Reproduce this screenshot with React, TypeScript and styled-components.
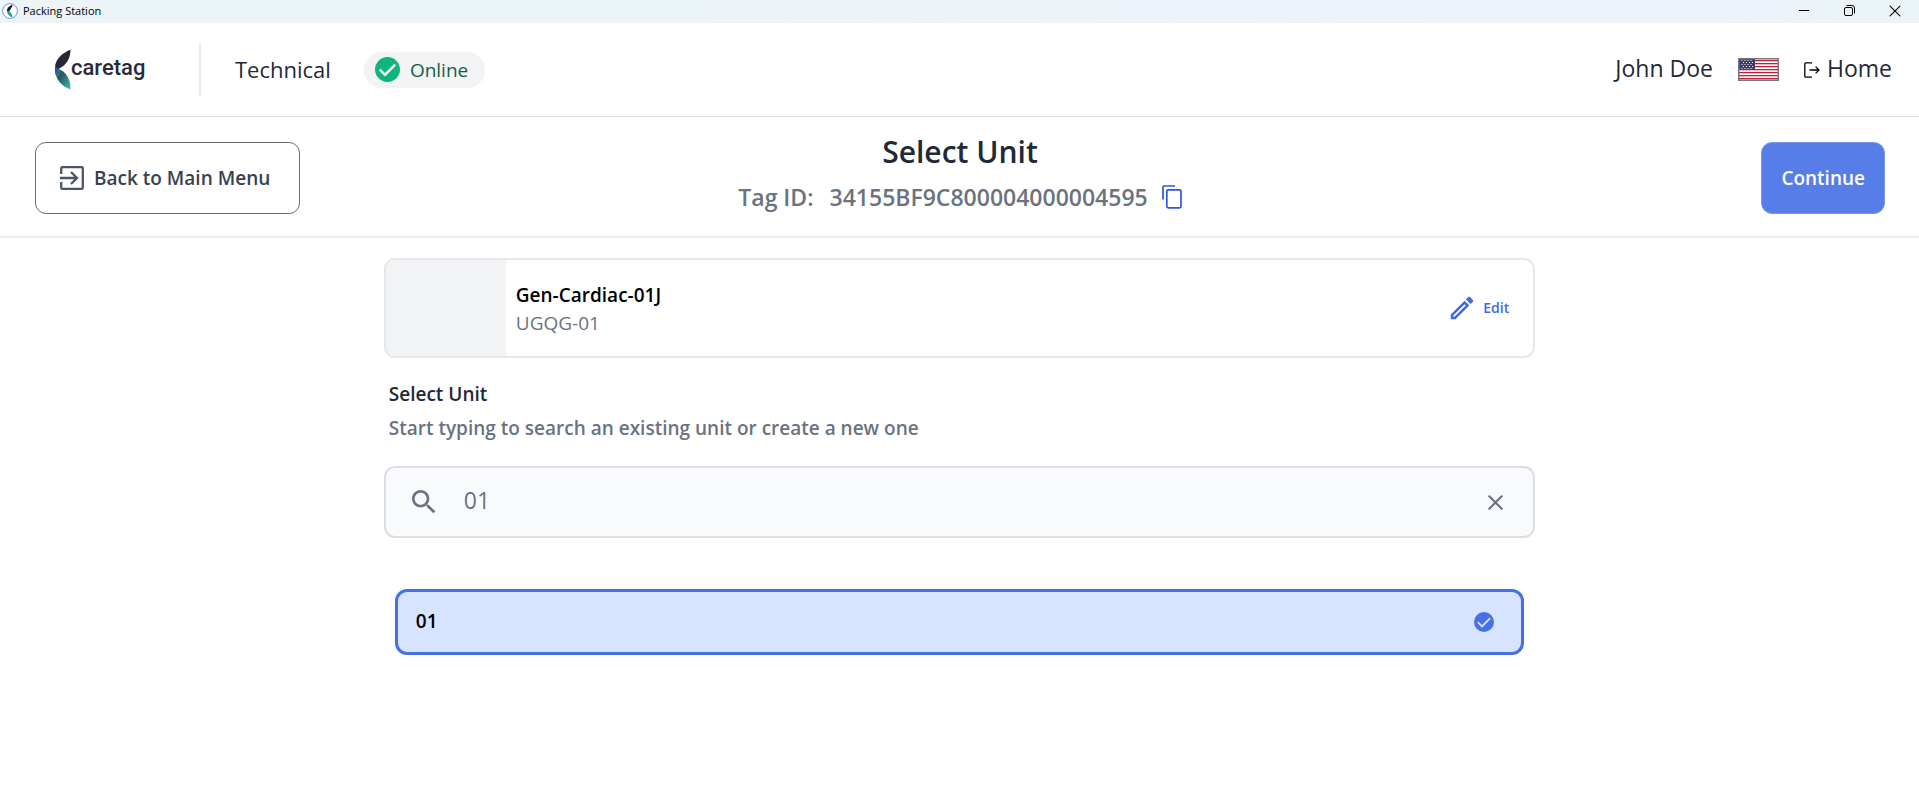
import React, { useState } from "react";
import styled, { createGlobalStyle } from "styled-components";

const GlobalStyle = createGlobalStyle`
  *, *::before, *::after { box-sizing: border-box; }
  body {
    margin: 0;
    background: #ffffff;
    color: #1f2937;
    font-family: "Segoe UI", "Open Sans", "Noto Sans", sans-serif;
  }
  h1, h2, p { margin: 0; }
  button, input { font: inherit; color: inherit; }
  button { cursor: pointer; }
  svg { display: block; flex: none; }
`;

const TitleBar = styled.div`
  display: flex;
  align-items: center;
  justify-content: space-between;
  height: 23px;
  padding: 0 18px 2px 2px;
  background: linear-gradient(90deg, #ebf4f7 0%, #ebf4f7 35%, #edf2fb 75%, #eef2fb 90%, #eaf4f6 96%);
`;

const AppName = styled.div`
  display: flex;
  align-items: center;
  gap: 5px;
  color: #000000;
  font-size: 11px;
  line-height: 16px;
`;

const WindowControls = styled.div`
  display: flex;
  gap: 34px;
`;

const WindowButton = styled.button`
  padding: 0;
  border: 0;
  background: none;
  color: #000000;
`;

const Header = styled.header`
  display: flex;
  align-items: center;
  justify-content: space-between;
  height: 94px;
  padding: 0 27px 0 54px;
  border-bottom: 1px solid #d9dbe1;
`;

const HeaderGroup = styled.div<{ $gap: number }>`
  display: flex;
  align-items: center;
  gap: ${(p) => p.$gap}px;
`;

const Brand = styled.a`
  display: flex;
  align-items: center;
  width: 145px;
  color: #2a2a3a;
  font-family: Roboto, sans-serif;
  font-size: 22px;
  font-weight: 500;
  line-height: 32px;
  text-decoration: none;
`;

const BrandName = styled.span`
  padding-bottom: 4px;
`;

const Divider = styled.div`
  width: 2px;
  height: 53px;
  background: #ececee;
`;

const Section = styled.span`
  padding: 0 33px 2px 34px;
  font-size: 22px;
  line-height: 32px;
`;

const UserName = styled.span`
  padding-bottom: 4px;
  font-size: 23px;
  line-height: 32px;
`;

const HomeLink = styled.a`
  display: flex;
  align-items: center;
  gap: 7px;
  color: #1f2937;
  font-size: 23px;
  line-height: 32px;
  text-decoration: none;
  svg { color: #000000; }
`;

const HomeText = styled.span`
  padding-bottom: 4px;
`;

const LanguageButton = styled.button`
  padding: 0;
  border: 0;
  background: none;
`;

const StatusPill = styled.div`
  display: flex;
  align-items: center;
  gap: 10px;
  height: 36px;
  padding: 0 17px 0 11px;
  border-radius: 18px;
  background: #f2f3f5;
  color: #12603f;
  font-size: 19px;
  line-height: 28px;
`;

const Toolbar = styled.div`
  display: grid;
  grid-template-columns: 1fr auto 1fr;
  align-items: center;
  height: 121px;
  padding: 2px 34px 0 35px;
  border-bottom: 2px solid #eeeeee;
`;

const ToolbarButton = styled.button<{ $primary?: boolean }>`
  display: flex;
  align-items: center;
  justify-content: center;
  gap: 10px;
  height: 72px;
  padding: ${(p) => (p.$primary ? "0 19px" : "0 29px 0 24px")};
  justify-self: ${(p) => (p.$primary ? "end" : "start")};
  border: 1px solid ${(p) => (p.$primary ? "#7b97ec" : "#6b7075")};
  border-radius: 11px;
  background: ${(p) => (p.$primary ? "#577de8" : "#ffffff")};
  color: ${(p) => (p.$primary ? "#ffffff" : "#374151")};
  font-size: 19px;
  font-weight: 600;
  line-height: 24px;
`;

const Heading = styled.div`
  display: flex;
  flex-direction: column;
  align-items: center;
  gap: 3px;
  padding-bottom: 9px;
`;

const Title = styled.h1`
  font-size: 30px;
  font-weight: 600;
  line-height: 44px;
`;

const TagLine = styled.div`
  display: flex;
  align-items: center;
  color: #6b7280;
  font-size: 23px;
  font-weight: 600;
  line-height: 40px;
`;

const TagValue = styled.span`
  padding: 0 14px 0 16px;
`;

const CopyButton = styled.button`
  padding: 0;
  border: 0;
  background: none;
  color: #2f55df;
`;

const Main = styled.main`
  width: 60%;
  margin: 0 auto;
  padding-top: 20px;
`;

const UnitCard = styled.section`
  display: flex;
  align-items: center;
  height: 100px;
  padding-right: 24px;
  overflow: hidden;
  border: 2px solid #e5e7eb;
  border-radius: 11px;
`;

const Thumbnail = styled.div`
  align-self: stretch;
  width: 120px;
  background: #f2f3f5;
`;

const CardText = styled.div`
  flex: 1;
  padding: 2px 0 0 10px;
`;

const UnitName = styled.h2`
  color: #000000;
  font-size: 19px;
  font-weight: 600;
  line-height: 28px;
`;

const UnitCode = styled.p`
  color: #6b7280;
  font-size: 19px;
  line-height: 28px;
`;

const EditButton = styled.button`
  display: flex;
  align-items: center;
  gap: 6px;
  padding: 0;
  border: 0;
  background: none;
  color: #4169e1;
  font-size: 14px;
  font-weight: 600;
  line-height: 20px;
`;

const FieldLabel = styled.label`
  display: block;
  padding: 20px 5px 0;
  font-size: 19px;
  font-weight: 600;
  line-height: 32px;
`;

const FieldHint = styled.p`
  padding: 2px 5px 22px;
  color: #6b7280;
  font-size: 19px;
  font-weight: 600;
  line-height: 32px;
`;

const SearchBox = styled.div`
  display: flex;
  align-items: center;
  gap: 24px;
  height: 72px;
  padding: 0 30px 0 22px;
  border: 2px solid #dddee4;
  border-radius: 11px;
  background: #f9fafb;
  color: #6b7280;
`;

const SearchInput = styled.input`
  flex: 1;
  min-width: 0;
  padding: 0 0 4px;
  border: 0;
  outline: 0;
  background: none;
  font-size: 23px;
  line-height: 32px;
`;

const ClearButton = styled.button`
  padding: 0;
  border: 0;
  background: none;
`;

const Results = styled.div`
  padding: 51px 11px 0;
`;

const ResultRow = styled.button<{ $selected: boolean }>`
  display: flex;
  align-items: center;
  justify-content: space-between;
  width: 100%;
  height: 66px;
  padding: 0 27px 0 18px;
  border: 3px solid ${(p) => (p.$selected ? "#4670e6" : "#e5e7eb")};
  border-radius: 12px;
  background: ${(p) => (p.$selected ? "#d6e4ff" : "#ffffff")};
  color: #000000;
  font-size: 19px;
  font-weight: 600;
  line-height: 24px;
`;

const ResultName = styled.span`
  padding-bottom: 2px;
`;

const AppBadge = () => (
  <svg width="16" height="16" viewBox="0 0 16 16" aria-hidden="true">
    <circle cx="8" cy="8" r="7.4" fill="#fff" stroke="#7591df" strokeWidth="1" />
    <path d="M10.6 1.6C7 3.2 5 5.4 4.8 8.2l2.6.3c.8-2.2 2.8-3.6 3.2-6.9z" fill="#15162a" />
    <path d="M6.2 7.6c2.3 1.7 4.3 3.6 4.4 7-3-1.2-5.6-3.6-5.7-6.6z" fill="#14a79c" />
  </svg>
);

const LogoMark = () => (
  <svg width="17" height="41" viewBox="0 0 17 41" aria-hidden="true">
    <defs>
      <linearGradient id="leaf" x1="0" y1="0" x2="1" y2="1">
        <stop offset="0" stopColor="#2c9e9b" />
        <stop offset="0.35" stopColor="#2b5563" />
        <stop offset="0.6" stopColor="#2f7f80" />
        <stop offset="1" stopColor="#3cc0b4" />
      </linearGradient>
    </defs>
    <path d="M16.6.4C8 4 1.5 10 1 18.2c.6 3 1.8 3 3.4 1.8C9 17.5 16.2 13.5 16.6.4z" fill="#26273a" />
    <path d="M4.2 19.8C11 22 17.2 30 16.4 40.5 8 37 1.5 31 1 21z" fill="url(#leaf)" />
    <path d="M1.2 17 4.5 20.4 1.6 26C.9 23.5.7 20 1.2 17z" fill="#3450a4" />
  </svg>
);

const CheckCircle = ({ size, color, mark }: { size: number; color: string; mark: string }) => (
  <svg width={size} height={size} viewBox="0 0 24 24" aria-hidden="true">
    <circle cx="12" cy="12" r="12" fill={color} />
    <path d="M4.6 12.2 9.6 17.2 19.4 7.4" fill="none" stroke={mark} strokeWidth="2.3" />
  </svg>
);

const Flag = () => (
  <svg width="41" height="23" viewBox="0 0 41 23" role="img" aria-label="United States">
    <rect width="41" height="23" fill="#fff" />
    {[2, 5, 8, 11, 14, 17, 20].map((y) => (
      <rect key={y} x="1" y={y} width="39" height="1.3" fill="#c0203a" />
    ))}
    <rect x="1" y="1" width="16" height="10.5" fill="#3c3b6e" />
    {[2, 4, 6, 8, 10].map((y, row) =>
      (row % 2 ? [5, 8, 11, 14] : [3.5, 6.5, 9.5, 12.5]).map((x) => (
        <rect key={`${x}-${y}`} x={x} y={y} width="1" height="1" fill="#fff" />
      ))
    )}
    <rect x="0.75" y="0.75" width="39.5" height="21.5" fill="none" stroke="#77777c" strokeWidth="1.5" />
  </svg>
);

const ExitIcon = () => (
  <svg width="16" height="16" viewBox="0 0 16 16" fill="none" stroke="currentColor" strokeWidth="1.3" aria-hidden="true">
    <path d="M8 .8H1.8a1 1 0 0 0-1 1v12.4a1 1 0 0 0 1 1H8M5.5 8H15M11.6 4.6 15 8l-3.4 3.4" />
  </svg>
);

const EnterBoxIcon = () => (
  <svg width="24" height="24" viewBox="0 0 24 24" fill="none" stroke="#4b5563" strokeWidth="2.3" aria-hidden="true">
    <path d="M1.2 8V2.2a1 1 0 0 1 1-1h19.6a1 1 0 0 1 1 1v19.6a1 1 0 0 1-1 1H2.2a1 1 0 0 1-1-1V16M0 12h17M11 6l6 6-6 6" />
  </svg>
);

const CopyIcon = () => (
  <svg width="20" height="24" viewBox="0 0 20 24" fill="none" stroke="currentColor" strokeWidth="1.7" aria-hidden="true">
    <path d="M1 14.5V2a1 1 0 0 1 1-1h11" />
    <rect x="4.8" y="4.8" width="14.2" height="18" rx="1.5" />
  </svg>
);

const PencilIcon = () => (
  <svg width="30" height="30" viewBox="0 0 24 24" fill="currentColor" aria-hidden="true">
    <path d="M14.06 9.02l.92.92L5.92 19H5v-.92l9.06-9.06M17.66 3c-.25 0-.51.1-.7.29l-1.83 1.83 3.75 3.75 1.83-1.83c.39-.39.39-1.02 0-1.41l-2.34-2.34c-.2-.2-.45-.29-.71-.29zm-3.6 3.19L3 17.25V21h3.75L17.81 9.94l-3.75-3.75z" />
  </svg>
);

const SearchIcon = () => (
  <svg width="32" height="32" viewBox="0 0 24 24" fill="currentColor" aria-hidden="true">
    <path d="M15.5 14h-.79l-.28-.27C15.41 12.59 16 11.11 16 9.5 16 5.91 13.09 3 9.5 3S3 5.91 3 9.5 5.91 16 9.5 16c1.61 0 3.09-.59 4.23-1.57l.27.28v.79l5 4.99L20.49 19l-4.99-5zm-6 0C7.01 14 5 11.99 5 9.5S7.01 5 9.5 5 14 7.01 14 9.5 11.99 14 9.5 14z" />
  </svg>
);

const CrossIcon = ({ size, width }: { size: number; width: number }) => (
  <svg width={size} height={size} viewBox="0 0 14 14" fill="none" stroke="currentColor" strokeWidth={width} strokeLinecap="round" aria-hidden="true">
    <path d="M1.2 1.2 12.8 12.8M12.8 1.2 1.2 12.8" />
  </svg>
);

export default function App() {
  const [query, setQuery] = useState("01");
  const [selected, setSelected] = useState("01");
  const units = ["01"];

  return (
    <>
      <GlobalStyle />
      <TitleBar>
        <AppName>
          <AppBadge />
          Packing Station
        </AppName>
        <WindowControls>
          <WindowButton aria-label="Minimize">
            <svg width="11" height="11" viewBox="0 0 11 11" aria-hidden="true">
              <path d="M0 5.5h10" stroke="currentColor" />
            </svg>
          </WindowButton>
          <WindowButton aria-label="Restore">
            <svg width="11" height="11" viewBox="0 0 11 11" fill="none" stroke="currentColor" aria-hidden="true">
              <rect x="0.5" y="2.5" width="8" height="8" rx="1.5" />
              <path d="M2.5.5H8A2.500 2.500 0 0 1 10.500 3v5.500" />
            </svg>
          </WindowButton>
          <WindowButton aria-label="Close">
            <CrossIcon size={12} width={1.2} />
          </WindowButton>
        </WindowControls>
      </TitleBar>

      <Header>
        <HeaderGroup $gap={0}>
          <Brand href="#">
            <LogoMark />
            <BrandName>caretag</BrandName>
          </Brand>
          <Divider />
          <Section>Technical</Section>
          <StatusPill>
            <CheckCircle size={25} color="#0fb57d" mark="#ffffff" />
            Online
          </StatusPill>
        </HeaderGroup>
        <HeaderGroup $gap={25}>
          <UserName>John Doe</UserName>
          <LanguageButton aria-label="Change language">
            <Flag />
          </LanguageButton>
          <HomeLink href="#">
            <ExitIcon />
            <HomeText>Home</HomeText>
          </HomeLink>
        </HeaderGroup>
      </Header>

      <Toolbar>
        <ToolbarButton>
          <EnterBoxIcon />
          Back to Main Menu
        </ToolbarButton>
        <Heading>
          <Title>Select Unit</Title>
          <TagLine>
            Tag ID:
            <TagValue>34155BF9C800004000004595</TagValue>
            <CopyButton aria-label="Copy tag ID">
              <CopyIcon />
            </CopyButton>
          </TagLine>
        </Heading>
        <ToolbarButton $primary>Continue</ToolbarButton>
      </Toolbar>

      <Main>
        <UnitCard>
          <Thumbnail />
          <CardText>
            <UnitName>Gen-Cardiac-01J</UnitName>
            <UnitCode>UGQG-01</UnitCode>
          </CardText>
          <EditButton>
            <PencilIcon />
            Edit
          </EditButton>
        </UnitCard>

        <FieldLabel htmlFor="unit-search">Select Unit</FieldLabel>
        <FieldHint id="unit-hint">Start typing to search an existing unit or create a new one</FieldHint>
        <SearchBox>
          <SearchIcon />
          <SearchInput
            id="unit-search"
            type="text"
            aria-describedby="unit-hint"
            value={query}
            onChange={(e) => setQuery(e.target.value)}
          />
          <ClearButton aria-label="Clear search" onClick={() => setQuery("")}>
            <CrossIcon size={15} width={2} />
          </ClearButton>
        </SearchBox>

        <Results>
          {units.filter((unit) => unit.includes(query)).map((unit) => (
            <ResultRow
              key={unit}
              $selected={unit === selected}
              aria-pressed={unit === selected}
              onClick={() => setSelected(unit)}
            >
              <ResultName>{unit}</ResultName>
              {unit === selected && <CheckCircle size={20} color="#4670e6" mark="#d6e4ff" />}
            </ResultRow>
          ))}
        </Results>
      </Main>
    </>
  );
}
